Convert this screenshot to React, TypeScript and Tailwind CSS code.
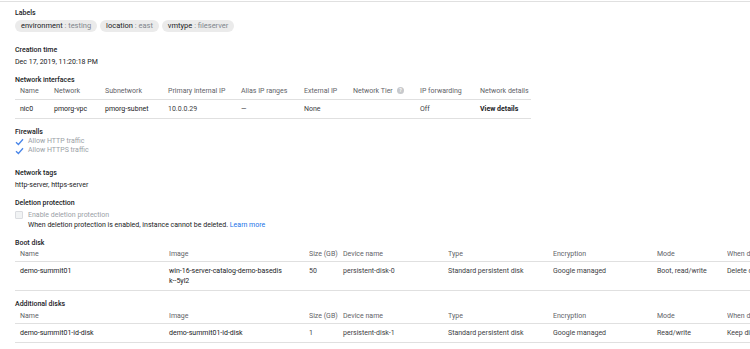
import React from "react";

const SectionTitle: React.FC<{ children: React.ReactNode; className?: string }> = ({ children, className = "" }) => (
  <div className={`font-medium text-[#202124] ${className}`}>{children}</div>
);

const Chip: React.FC<{ k: string; v: string }> = ({ k, v }) => (
  <span className="inline-flex items-center h-[12px] rounded-full bg-[#ebebeb] px-[6px] text-[7.5px]">
    <span className="text-[#202124]">{k}</span>
    <span className="text-[#80868b]">&nbsp;: {v}</span>
  </span>
);

const Check: React.FC = () => (
  <svg width="9" height="8" viewBox="0 0 9 8" className="shrink-0">
    <path d="M1 4.2 L3.4 6.5 L8 1.3" fill="none" stroke="#4a86e8" strokeWidth="1.3" />
  </svg>
);

const HelpIcon: React.FC = () => (
  <svg width="7" height="7" viewBox="0 0 14 14" className="inline-block ml-[4px] -mt-px align-middle">
    <circle cx="7" cy="7" r="7" fill="#c7c9cc" />
    <text x="7" y="10.5" textAnchor="middle" fontSize="10" fill="#fff" fontFamily="Roboto, sans-serif" fontWeight="700">?</text>
  </svg>
);

const nicCols = "grid-cols-[39px_51px_63px_73px_63px_49px_67px_60px_51px]";
const diskCols = "grid-cols-[154px_140px_34px_105px_105px_104px_70px_100px]";

const diskHeaders = ["Name", "Image", "Size (GB)", "Device name", "Type", "Encryption", "Mode", "When deleting instance"];

const DiskTable: React.FC<{ row: React.ReactNode[]; className?: string }> = ({ row, className = "" }) => (
  <div className={`w-[812px] ${className}`}>
    <div className={`grid ${diskCols} border-b border-[#e0e0e0] text-[#5f6368]`}>
      {diskHeaders.map((h, i) => (
        <div key={i} className={`pt-[1px] pb-[2px] whitespace-nowrap overflow-hidden ${i === 0 ? "pl-[5px]" : ""}`}>{h}</div>
      ))}
    </div>
    <div className={`grid ${diskCols} border-b border-[#e0e0e0]`}>
      {row.map((c, i) => (
        <div key={i} className={`pt-[4px] pb-[4px] ${i === 0 ? "pl-[5px]" : ""} ${i < 2 ? "text-[#202124]" : "text-[#3c4043]"} whitespace-nowrap`}>{c}</div>
      ))}
    </div>
  </div>
);

export default function App() {
  return (
    <div className="w-[750px] h-[349px] overflow-hidden bg-white text-[7px] leading-[10px] font-['Roboto',sans-serif]">
      <div className="h-px mt-px bg-[#e0e0e0]" />
      <div className="pl-[15px]">
        <SectionTitle className="mt-[6px]">Labels</SectionTitle>
        <div className="flex gap-[3px] mt-[2px]">
          <Chip k="environment" v="testing" />
          <Chip k="location" v="east" />
          <Chip k="vmtype" v="fileserver" />
        </div>

        <SectionTitle className="mt-[13px]">Creation time</SectionTitle>
        <div className="mt-[2px] text-[#202124]">Dec 17, 2019, 11:20:18 PM</div>

        <SectionTitle className="mt-[8px]">Network interfaces</SectionTitle>
        <div className="w-[516px]">
          <div className={`grid ${nicCols} border-b border-[#e0e0e0] text-[#5f6368]`}>
            <div className="pl-[5px] pt-[1px] pb-[3px]">Name</div>
            <div className="pt-[1px] pb-[3px]">Network</div>
            <div className="pt-[1px] pb-[3px]">Subnetwork</div>
            <div className="pt-[1px] pb-[3px]">Primary internal IP</div>
            <div className="pt-[1px] pb-[3px]">Alias IP ranges</div>
            <div className="pt-[1px] pb-[3px]">External IP</div>
            <div className="pt-[1px] pb-[3px] whitespace-nowrap">Network Tier<HelpIcon /></div>
            <div className="pt-[1px] pb-[3px]">IP forwarding</div>
            <div className="pt-[1px] pb-[3px] whitespace-nowrap">Network details</div>
          </div>
          <div className={`grid ${nicCols} border-b border-[#e0e0e0] text-[#3c4043]`}>
            <div className="pl-[5px] py-[4px] text-[#202124]">nic0</div>
            <div className="py-[4px] text-[#202124]">pmorg-vpc</div>
            <div className="py-[4px] text-[#202124]">pmorg-subnet</div>
            <div className="py-[4px]">10.0.0.29</div>
            <div className="py-[4px]">—</div>
            <div className="py-[4px]">None</div>
            <div className="py-[4px]"></div>
            <div className="py-[4px]">Off</div>
            <div className="py-[4px] font-bold text-[#202124] whitespace-nowrap">View details</div>
          </div>
        </div>

        <SectionTitle className="mt-[8px]">Firewalls</SectionTitle>
        <div className="leading-[9px] text-[#9aa0a6]">
          <div className="flex items-center gap-[4px]"><Check />Allow HTTP traffic</div>
          <div className="flex items-center gap-[4px]"><Check />Allow HTTPS traffic</div>
        </div>

        <SectionTitle className="mt-[13px]">Network tags</SectionTitle>
        <div className="mt-[2px] text-[#202124]">http-server, https-server</div>

        <SectionTitle className="mt-[8px]">Deletion protection</SectionTitle>
        <div className="flex items-center gap-[5px] mt-[2px] text-[#9aa0a6]">
          <span className="w-[8px] h-[8px] border border-[#dadce0] bg-[#f1f3f4] rounded-[1px]" />
          Enable deletion protection
        </div>
        <div className="pl-[13px] text-[#202124]">
          When deletion protection is enabled, instance cannot be deleted.{" "}
          <span className="text-[#1a73e8]">Learn more</span>
        </div>

        <SectionTitle className="mt-[8px]">Boot disk</SectionTitle>
        <DiskTable
          row={[
            "demo-summit01",
            <span className="block">win-16-server-catalog-demo-basedis<br />k--5yl2</span>,
            "50",
            "persistent-disk-0",
            "Standard persistent disk",
            "Google managed",
            "Boot, read/write",
            "Delete disk",
          ]}
        />

        <SectionTitle className="mt-[8px]">Additional disks</SectionTitle>
        <DiskTable
          className="mt-px"
          row={[
            "demo-summit01-id-disk",
            "demo-summit01-id-disk",
            "1",
            "persistent-disk-1",
            "Standard persistent disk",
            "Google managed",
            "Read/write",
            "Keep disk",
          ]}
        />
      </div>
    </div>
  );
}
